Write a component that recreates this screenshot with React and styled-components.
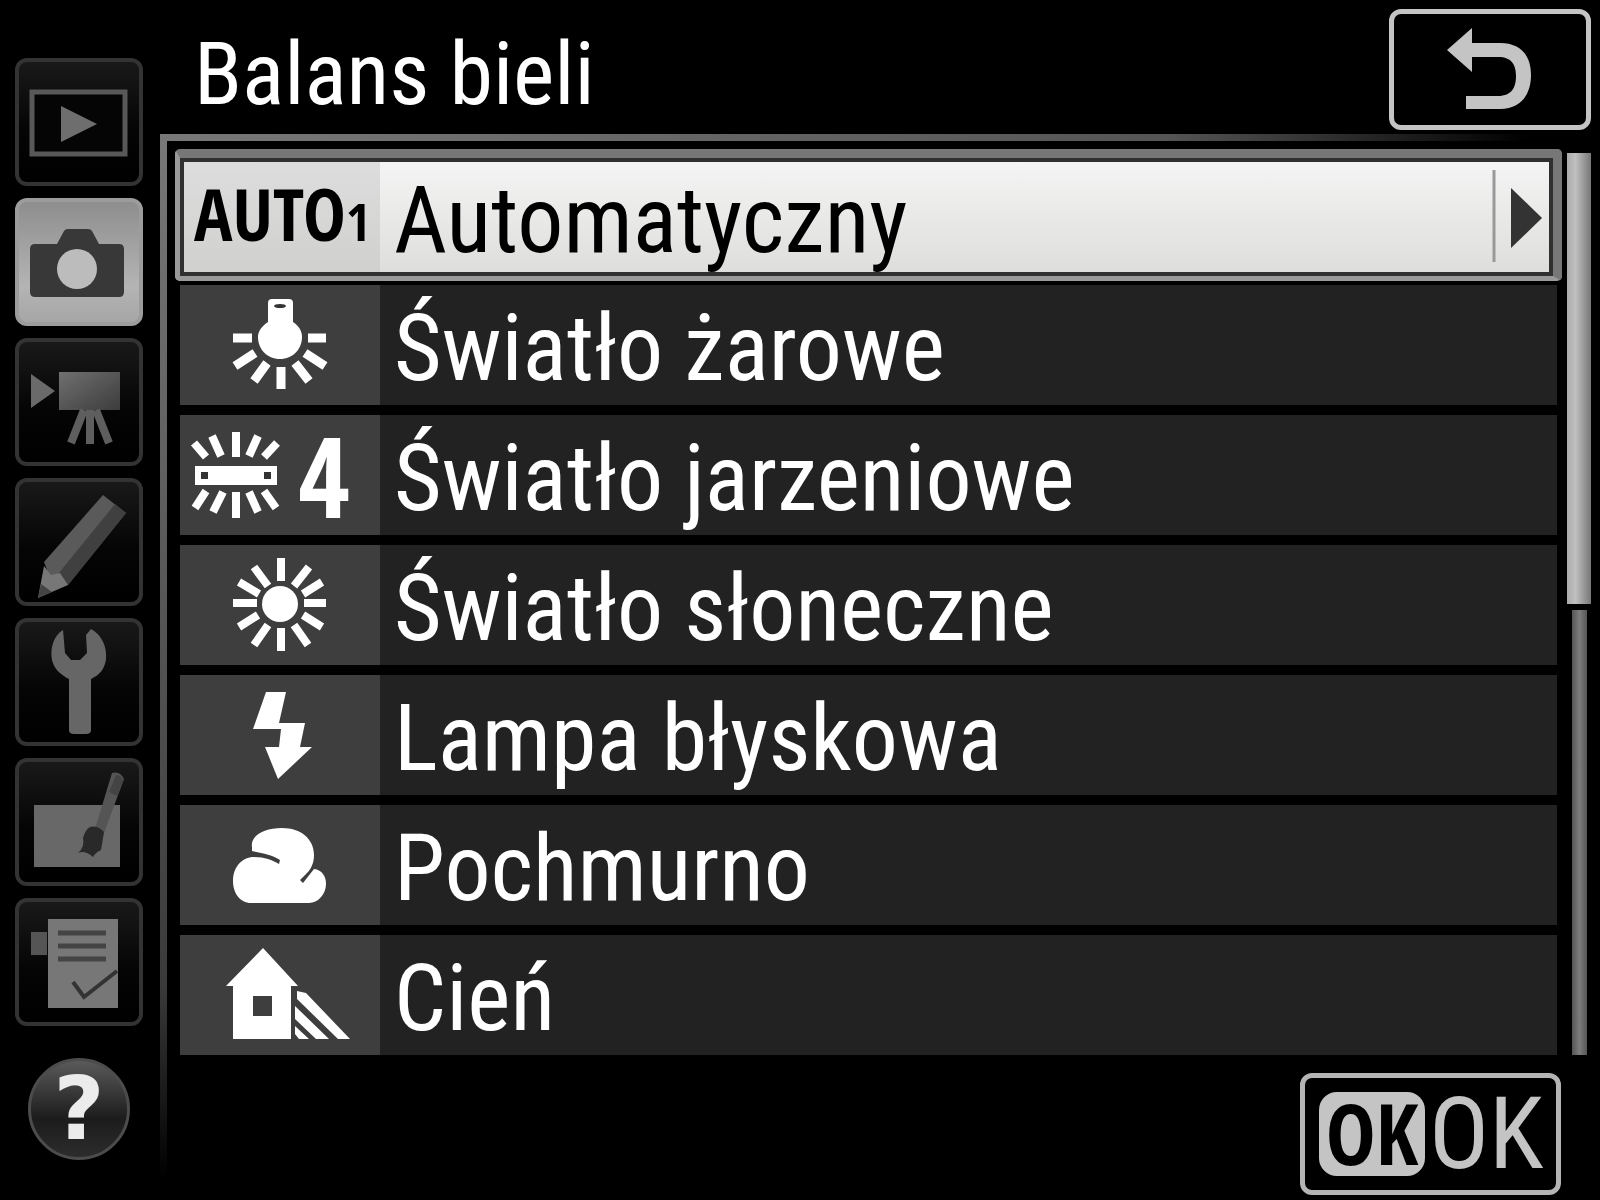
import React, { useState } from "react";
import styled, { createGlobalStyle } from "styled-components";

const GlobalStyle = createGlobalStyle`
  * {
    box-sizing: border-box;
  }

  body {
    margin: 0;
    background: #000;
    color: #fff;
    font-family: "Roboto Condensed", "Roboto", sans-serif;
  }

  button {
    font: inherit;
    color: inherit;
    padding: 0;
    border: 0;
    background: none;
    cursor: pointer;
  }

  svg {
    display: block;
  }
`;

const Screen = styled.div`
  display: grid;
  grid-template-columns: 160px minmax(0, 1fr);
  min-height: 100vh;
`;

const Sidebar = styled.nav`
  display: flex;
  flex-direction: column;
  align-items: flex-start;
  gap: 12px;
  padding: 58px 0 0 15px;
`;

const Tab = styled.button`
  width: 128px;
  height: 128px;
  border-radius: 12px;
  border: 4px solid ${(props) => (props.$active ? "#9c9c9c" : "#333")};
  background: ${(props) =>
    props.$active
      ? "linear-gradient(#8e8e8e, #b4b4b4 70%, #a6a6a6)"
      : "linear-gradient(#191919, #050505 55%, #000)"};

  svg {
    width: 120px;
    height: 120px;
  }
`;

const HelpButton = styled.button`
  width: 102px;
  height: 102px;
  margin: 20px 0 0 13px;
  border-radius: 50%;
  border: 3px solid #4c4c4c;
  background: linear-gradient(#5a5a5a, #1c1c1c 60%, #2c2c2c);
  color: #ececec;
  font-family: "DejaVu Sans", sans-serif;
  font-size: 88px;
  font-weight: 700;
  line-height: 92px;
`;

const Main = styled.main`
  display: flex;
  flex-direction: column;
`;

const Header = styled.header`
  display: flex;
  justify-content: space-between;
  align-items: flex-start;
  height: 134px;
  padding: 9px 9px 0 34px;
`;

const Title = styled.h1`
  margin: 0;
  font-size: 88px;
  font-weight: 400;
  line-height: 130px;
`;

const BackButton = styled.button`
  width: 202px;
  height: 121px;
  border: 5px solid #c4c4c4;
  border-radius: 12px;

  svg {
    width: 192px;
    height: 111px;
  }
`;

/* the frame is only a left and a top rule, both fading to black */
const Panel = styled.div`
  flex: 1;
  padding: 15px 9px 0 15px;
  background:
    linear-gradient(#787878, #4a4a4a 60%, #3a3a3a 80%, #000 98%) 0 0 / 7px 100%
      no-repeat,
    linear-gradient(90deg, #787878, #555 70%, #000 95%) 0 0 / 100% 7px no-repeat;
`;

const ListArea = styled.div`
  display: grid;
  grid-template-columns: minmax(0, 1fr) 24px;
  gap: 5px;
`;

const List = styled.ul`
  display: flex;
  flex-direction: column;
  gap: 10px;
  margin: 0;
  padding: 0;
  list-style: none;
`;

const Item = styled.li`
  padding: ${(props) => (props.$active ? "0" : "0 5px")};
  margin-bottom: ${(props) => (props.$active ? "-6px" : "0")};
`;

const Row = styled.button`
  display: grid;
  grid-template-columns: 200px minmax(0, 1fr);
  width: 100%;
  height: 120px;
  background: linear-gradient(90deg, #3e3e3e 200px, #222 200px);
  color: #fff;
  text-align: left;

  ${(props) =>
    props.$active &&
    `
    grid-template-columns: 196px minmax(0, 1fr) 58px;
    height: 132px;
    border: 5px solid #999;
    border-top: 9px solid #777;
    border-right: 9px solid #777;
    border-radius: 5px;
    outline: 0;
    padding: 4px;
    background:
      linear-gradient(90deg, #bbb6 196px, #0000 196px) content-box,
      linear-gradient(#f4f4f4, #dededc) content-box,
      #303030;
    color: #000;
  `}
`;

const IconCell = styled.span`
  display: flex;
  align-items: center;
  justify-content: center;
  height: 100%;

  svg {
    width: 200px;
    height: 120px;
  }
`;

const AutoLabel = styled.span`
  font-family: "Open Sans Condensed", "Roboto Condensed", sans-serif;
  font-size: 72px;
  font-weight: 700;
  line-height: 96px;

  small {
    font-size: 52px;
  }
`;

const Preset = styled.span`
  width: 100%;
  display: grid;
  grid-template-columns: 108px 1fr;
  align-items: center;

  svg {
    width: 108px;
  }

  span {
    padding-left: 10px;
    font-family: "Open Sans Condensed", "Roboto Condensed", sans-serif;
    font-size: 112px;
    font-weight: 700;
    line-height: 116px;
  }
`;

const Label = styled.span`
  align-self: center;
  padding: 8px 0 0 14px;
  font-size: 92px;
  line-height: 100px;
  white-space: nowrap;
`;

const Submenu = styled.span`
  align-self: center;

  svg {
    width: 58px;
    height: 102px;
  }
`;

const Scrollbar = styled.div`
  display: flex;
  flex-direction: column;
  align-items: center;
  gap: 6px;
  padding-top: 4px;
`;

const Thumb = styled.div`
  width: 24px;
  flex: 451;
  background: linear-gradient(90deg, #aaa, #c0c0c0 35%, #777);
`;

const Track = styled.div`
  width: 15px;
  flex: 445;
  background: linear-gradient(90deg, #555, #7c7c7c 50%, #555);
`;

const Footer = styled.footer`
  display: flex;
  justify-content: flex-end;
  padding: 18px 30px 5px 0;
`;

const OkButton = styled.button`
  display: flex;
  align-items: center;
  gap: 4px;
  width: 261px;
  height: 122px;
  padding-left: 14px;
  border: 5px solid #b4b4b4;
  border-radius: 12px;
  color: #c4c4c4;
  font-size: 100px;
  font-weight: 400;
  line-height: 112px;
`;

const OkBadge = styled.span`
  width: 106px;
  height: 84px;
  border-radius: 18px;
  background: #c4c4c4;
  color: #000;
  font-family: "Open Sans Condensed", "Roboto Condensed", sans-serif;
  font-size: 84px;
  font-weight: 700;
  line-height: 82px;
  text-align: center;
`;

const PlaybackIcon = () => (
  <svg viewBox="0 0 120 120">
    <rect x="13" y="30" width="93" height="62" fill="#050505" stroke="#585858" strokeWidth="5" />
    <path d="M42 44v36l36-18z" fill="#6e6e6e" />
  </svg>
);

const CameraIcon = () => (
  <svg viewBox="0 0 120 120">
    <path
      d="M16 42h22l7-13q1-2 4-2h20q3 0 4 2l7 13h20q5 0 5 5v43q0 5-5 5H16q-5 0-5-5V47q0-5 5-5z"
      fill="#383838"
    />
    <circle cx="58" cy="67" r="20" fill="#bcbcbc" />
  </svg>
);

const MovieIcon = () => (
  <svg viewBox="0 0 120 120">
    <defs>
      <linearGradient id="movie" x1="0" y1="0" x2="1" y2="1">
        <stop offset="0" stopColor="#707070" />
        <stop offset="1" stopColor="#3c3c3c" />
      </linearGradient>
    </defs>
    <path d="M12 32v34l24-17z" fill="#6a6a6a" />
    <rect x="40" y="30" width="61" height="38" fill="url(#movie)" />
    <path d="M65 68L52 101M71 68v34M77 68l13 33" stroke="#5e5e5e" strokeWidth="8" />
  </svg>
);

const PencilIcon = () => (
  <svg viewBox="0 0 120 120">
    <path d="M84 13l23 18-58 72-17-5-7-18z" fill="#5a5a5a" />
    <path d="M96 22l11 9-58 72-14-6z" fill="#404040" />
    <path d="M25 84l-6 32 30-13-8-12-9 2z" fill="#777" />
    <path d="M22 102l-3 14 14-6z" fill="#444" />
  </svg>
);

const WrenchIcon = () => (
  <svg viewBox="0 0 120 120">
    <path
      d="M44 8C34 14 31 27 33 38c2 9 9 15 17 19v51q0 4 5 4h12q5 0 5-4V57c9-4 14-11 15-20 1-12-4-24-15-30l-5 6 1 18-7 7H52l-6-7z"
      fill="#666"
    />
  </svg>
);

const RetouchIcon = () => (
  <svg viewBox="0 0 120 120">
    <rect x="15" y="43" width="86" height="62" fill="#686868" />
    <path d="M93 11q8-2 12 6L85 71l-9-4z" fill="#555" />
    <path d="M97 13q5 0 7 5L98 34l-8-4z" fill="#444" />
    <path d="M71 65q7-2 14 5l-3 18q-6 3-8 7-8-7-15-4 7-6 5-15 2-8 7-11z" fill="#292929" />
  </svg>
);

const RecentIcon = () => (
  <svg viewBox="0 0 120 120">
    <path d="M12 30h16v23H12z" fill="#555" />
    <path d="M29 17h70v89H29z" fill="#777" />
    <path d="M39 31h48M39 44h48M39 57h48" stroke="#444" strokeWidth="5" />
    <path d="M54 80l11 15 33-26" fill="none" stroke="#333" strokeWidth="4" />
  </svg>
);

const BackIcon = () => (
  <svg viewBox="0 0 192 111">
    <path
      d="M53 36l25-22v15h28c22 0 31 14 31 32s-9 34-31 34H72V82h32c14 0 18-9 18-20s-4-19-18-19H78v15z"
      fill="#c4c4c4"
    />
  </svg>
);

const BulbIcon = () => (
  <svg viewBox="0 0 200 120">
    <path
      fill="#fff"
      d="M88 18q0-4 4-4h17q4 0 4 4v19c6 4 9 9 9 15 0 12-9 22-22 22s-22-10-22-22c0-6 4-11 10-15z"
    />
    <ellipse cx="100" cy="21" rx="6" ry="2" fill="#333" />
    <path
      stroke="#fff"
      strokeWidth="9"
      strokeLinejoin="round"
      d="M53 53h19M128 53h18M55 81l20-13M145 81l-20-13M74 96l13-18M129 96L115 78M101 82v22"
    />
  </svg>
);

const TubeIcon = () => (
  <svg viewBox="0 0 108 120">
    <rect x="15" y="51" width="82" height="19" fill="#fff" />
    <path d="M21 57h7v7h-7zM84 57h7v7h-7z" fill="#333" />
    <path
      stroke="#fff"
      strokeWidth="8"
      d="M14 28l12 14M32 21l9 20M56 17v25M78 21L69 41M97 28L84 42M15 93l11-17M33 97l10-20M56 77v26M78 97L69 77M96 93L84 76"
    />
  </svg>
);

const SunIcon = () => (
  <svg viewBox="0 0 200 120">
    <circle cx="100" cy="59" r="18" fill="#fff" />
    <path
      stroke="#fff"
      strokeWidth="8"
      d="M101 13v23M101 83v23M53 58h24M124 58h22M74 22l14 19M129 22l-15 19M59 37l20 12M142 37l-19 12M59 82l19-12M142 82l-19-12M74 100l14-20M128 100l-14-20"
    />
  </svg>
);

const FlashIcon = () => (
  <svg viewBox="0 0 200 120">
    <path d="M86 17h20l-7 31h26l-5 24h12L98 104 85 72h14l2-18H73z" fill="#fff" />
  </svg>
);

const CloudIcon = () => (
  <svg viewBox="0 0 200 120">
    <path
      d="M72 42c-2-11 12-19 30-19 19 0 32 11 32 27 0 8-3 14-7 18l-7 7 3 3 11-14c8 1 12 7 12 15 0 10-8 19-17 19H71c-11 0-18-10-18-22 0-14 9-24 21-24 11 0 18 3 25 7l1-4c-7-5-18-7-28-9z"
      fill="#fff"
    />
  </svg>
);

const ShadeIcon = () => (
  <svg viewBox="0 0 200 120">
    <path d="M83 13L46 51h7v53h58V51h7zM73 61h19v20H73z" fill="#fff" fillRule="evenodd" />
    <path
      d="M117 56l9 2 44 46h-12l-41-40zM115 71l34 33h-13l-21-20zM115 91l14 13h-10l-4-5z"
      fill="#fff"
    />
  </svg>
);

const tabs = [
  { name: "Odtwarzanie", icon: <PlaybackIcon /> },
  { name: "Fotografowanie", icon: <CameraIcon /> },
  { name: "Filmowanie", icon: <MovieIcon /> },
  { name: "Ustawienia osobiste", icon: <PencilIcon /> },
  { name: "Ustawienia", icon: <WrenchIcon /> },
  { name: "Retusz", icon: <RetouchIcon /> },
  { name: "Moje menu", icon: <RecentIcon /> },
];

const options = [
  {
    label: "Automatyczny",
    icon: (
      <AutoLabel>
        AUTO<small>1</small>
      </AutoLabel>
    ),
  },
  { label: "Światło żarowe", icon: <BulbIcon /> },
  {
    label: "Światło jarzeniowe",
    icon: (
      <Preset>
        <TubeIcon />
        <span>4</span>
      </Preset>
    ),
  },
  { label: "Światło słoneczne", icon: <SunIcon /> },
  { label: "Lampa błyskowa", icon: <FlashIcon /> },
  { label: "Pochmurno", icon: <CloudIcon /> },
  { label: "Cień", icon: <ShadeIcon /> },
];

const App = () => {
  const [tab, setTab] = useState(1);
  const [selected, setSelected] = useState(0);

  return (
    <>
      <GlobalStyle />
      <Screen>
        <Sidebar>
          {tabs.map((item, index) => (
            <Tab
              key={item.name}
              aria-label={item.name}
              $active={index === tab}
              onClick={() => setTab(index)}
            >
              {item.icon}
            </Tab>
          ))}
          <HelpButton>?</HelpButton>
        </Sidebar>
        <Main>
          <Header>
            <Title>Balans bieli</Title>
            <BackButton aria-label="Wstecz">
              <BackIcon />
            </BackButton>
          </Header>
          <Panel>
            <ListArea>
              <List>
                {options.map((option, index) => (
                  <Item key={option.label} $active={index === selected}>
                    <Row
                      $active={index === selected}
                      onClick={() => setSelected(index)}
                    >
                      <IconCell>{option.icon}</IconCell>
                      <Label>{option.label}</Label>
                      {index === selected && (
                        <Submenu>
                          <svg viewBox="0 0 58 102">
                            <path d="M3 4v92" stroke="#999" strokeWidth="3" />
                            <path d="M20 22v60l31-30z" fill="#333" />
                          </svg>
                        </Submenu>
                      )}
                    </Row>
                  </Item>
                ))}
              </List>
              <Scrollbar>
                <Thumb />
                <Track />
              </Scrollbar>
            </ListArea>
            <Footer>
              <OkButton>
                <OkBadge>OK</OkBadge>
                OK
              </OkButton>
            </Footer>
          </Panel>
        </Main>
      </Screen>
    </>
  );
};

export default App;
